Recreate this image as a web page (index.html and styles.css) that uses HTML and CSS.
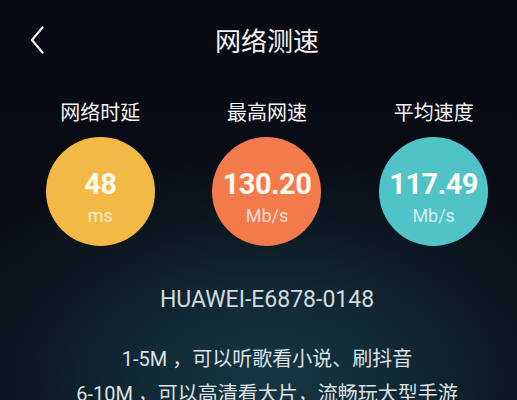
FILE: index.html
```html
<!DOCTYPE html>
<html lang="zh-CN">
<head>
<meta charset="utf-8">
<title>网络测速</title>
<link rel="stylesheet" href="styles.css">
</head>
<body>
<div class="screen">
  <header class="topbar">
    <div class="back">
      <svg width="14" height="28" viewBox="0 0 14 28"><path d="M12.5 1.5 L2 14 L12.5 26.5" fill="none" stroke="#f2f2f2" stroke-width="2.2" stroke-linecap="round" stroke-linejoin="round"/></svg>
    </div>
    <h1 class="title">网络测速</h1>
    <div></div>
  </header>
  <section class="stats">
    <div class="stat">
      <div class="label">网络时延</div>
      <div class="circle yellow"><span class="num">48</span><span class="unit">ms</span></div>
    </div>
    <div class="stat">
      <div class="label">最高网速</div>
      <div class="circle orange"><span class="num">130.20</span><span class="unit">Mb/s</span></div>
    </div>
    <div class="stat">
      <div class="label">平均速度</div>
      <div class="circle teal"><span class="num">117.49</span><span class="unit">Mb/s</span></div>
    </div>
  </section>
  <div class="ssid">HUAWEI-E6878-0148</div>
  <div class="tips">
    <p>1-5M ，可以听歌看小说、刷抖音</p>
    <p>6-10M ，可以高清看大片，流畅玩大型手游</p>
  </div>
</div>
</body>
</html>
```
FILE: styles.css
```css
html, body {
  margin: 0;
  padding: 0;
  background: #090b13;
}
.screen {
  width: 517px;
  height: 400px;
  overflow: hidden;
  box-sizing: border-box;
  padding-left: 17px;
  font-family: Roboto, "Noto Sans CJK SC", sans-serif;
  color: #f2f2f2;
  background:
    radial-gradient(ellipse 360px 230px at 52% 95%, #163644 0%, #112a37 35%, #0c1822 70%, rgba(10,14,22,0) 100%),
    linear-gradient(180deg, #090b13 0%, #090c15 50%, #0a121b 100%);
}
.topbar {
  height: 79px;
  display: grid;
  grid-template-columns: 1fr auto 1fr;
  align-items: center;
}
.back {
  padding-left: 13px;
  display: flex;
  align-items: center;
}
.back svg { display: block; }
.title {
  margin: 0;
  font-family: "Noto Sans CJK SC", sans-serif;
  font-weight: 400;
  font-size: 26px;
  line-height: 32px;
  color: #f4f4f4;
}
.stats {
  margin-top: 21px;
  display: grid;
  grid-template-columns: repeat(3, 1fr);
}
.stat {
  display: flex;
  flex-direction: column;
  align-items: center;
}
.label {
  font-family: "Noto Sans CJK SC", sans-serif;
  font-size: 20px;
  line-height: 24px;
  color: #f4f4f4;
}
.circle {
  margin-top: 13px;
  width: 109px;
  height: 109px;
  border-radius: 50%;
  box-sizing: border-box;
  padding-top: 30px;
  display: flex;
  flex-direction: column;
  align-items: center;
}
.yellow { background: #f3b945; }
.orange { background: #f27a4b; }
.teal { background: #4fc3c5; }
.num {
  font-family: Roboto, sans-serif;
  font-weight: 700;
  font-size: 29px;
  letter-spacing: -0.5px;
  line-height: 34px;
  color: #fdf9f0;
}
.unit {
  margin-top: 3px;
  font-family: Roboto, sans-serif;
  font-size: 18px;
  line-height: 23px;
  color: rgba(255, 255, 255, 0.75);
}
.ssid {
  margin-top: 39px;
  text-align: center;
  font-family: Roboto, sans-serif;
  font-size: 23px;
  line-height: 30px;
  color: #d3dadd;
}
.tips {
  margin-top: 27px;
  text-align: center;
  font-family: Roboto, "Noto Sans CJK SC", sans-serif;
  font-size: 20px;
  line-height: 35px;
  color: #dde2e4;
}
.tips p { margin: 0; white-space: nowrap; }
```
